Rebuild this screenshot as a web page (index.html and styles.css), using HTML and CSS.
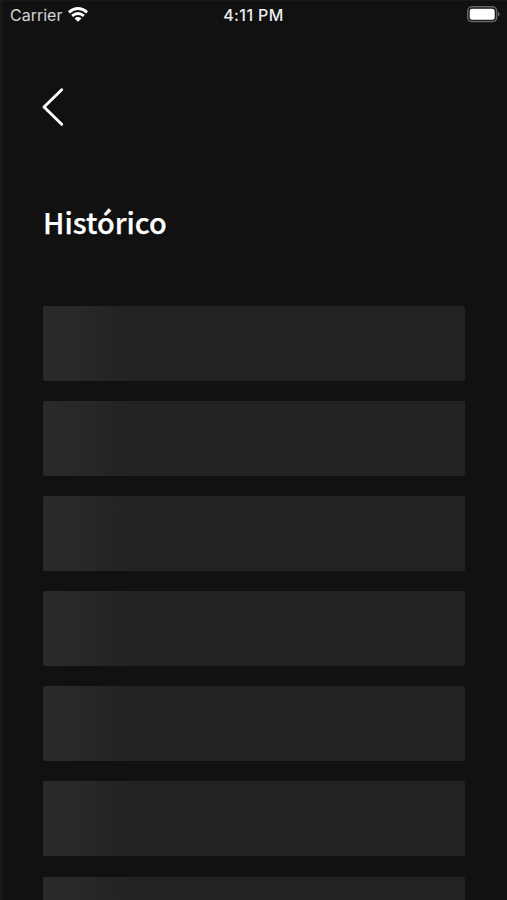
FILE: index.html
```html
<!DOCTYPE html>
<html lang="pt-BR">
<head>
<meta charset="utf-8">
<title>Histórico</title>
<link rel="stylesheet" href="styles.css">
</head>
<body>
<div class="screen">
  <header class="status">
    <div class="carrier"><span>Carrier</span>
      <svg class="wifi" width="20" height="15" viewBox="0 0 20 15" fill="none" stroke="#fff" stroke-width="2.9">
        <path d="M.9 5.3Q10-2.1 19.1 5.3"/><path d="M4.1 8.8Q10 4.1 15.9 8.8"/><path d="M10 14.8L6.5 11.4Q10 8.6 13.5 11.4Z" fill="#fff" stroke="none"/>
      </svg>
    </div>
    <time class="time">4:11 PM</time>
    <svg class="battery" width="33" height="17" viewBox="0 0 33 17">
      <rect x=".8" y=".8" width="28.8" height="14.8" rx="4.2" fill="none" stroke="#666" stroke-width="1.5"/>
      <rect x="2.7" y="2.7" width="25" height="11" rx="2.3" fill="#fff"/>
      <path d="M31 5.8Q32.6 6.4 32.6 8.2T31 10.6Z" fill="#666"/>
    </svg>
  </header>
  <button class="back" aria-label="Voltar">
    <svg width="24" height="40" viewBox="0 0 24 40" fill="none" stroke="#fff" stroke-width="2.9" stroke-linecap="round" stroke-linejoin="round"><path d="M20.7 2.7L3 20L20.7 37.3"/></svg>
  </button>
  <h1 class="title">Histórico</h1>
  <main class="list">
    <div class="item"></div><div class="item"></div><div class="item"></div><div class="item"></div><div class="item"></div><div class="item"></div><div class="item"></div>
  </main>
</div>
</body>
</html>
```
FILE: styles.css
```css
* { box-sizing: border-box; }
body { margin: 0; background: #111; }
.screen {
  height: 900px;
  overflow: hidden;
  display: flex;
  flex-direction: column;
  background: #111;
  border-left: 2px solid #191919;
  border-top: 1px solid #191919;
  color: #fff;
}
.status {
  height: 28px;
  flex: none;
  display: grid;
  grid-template-columns: 1fr auto 1fr;
  align-items: center;
  padding: 0 7px 0 8px;
  font: 500 16px/20px Inter, sans-serif;
}
.carrier { display: flex; align-items: center; gap: 6px; font-weight: 400; color: #d4d4d4; }
.wifi { display: block; margin-top: -1px; }
.time { color: #eee; font-size: 16px; letter-spacing: .4px; margin: -1px 3px 0 0; }
.battery { justify-self: end; margin-top: -1px; }
.back {
  flex: none;
  width: 24px;
  height: 40px;
  margin: 58px 0 0 39px;
  padding: 0;
  border: 0;
  background: none;
}
.back svg { display: block; }
.title {
  flex: none;
  margin: 74px 0 0 41px;
  font: 500 28.9px/40px "Noto Sans CJK SC", sans-serif;
  -webkit-text-stroke: .25px #fff;
}
.list {
  display: flex;
  flex-direction: column;
  gap: 20.2px;
  margin: 64.5px 42px 0 41px;
}
.item {
  flex: none;
  height: 75px;
  border-radius: 2px;
  background: linear-gradient(90deg, #292929 0, #282828 36px, #222 86px);
}
```
